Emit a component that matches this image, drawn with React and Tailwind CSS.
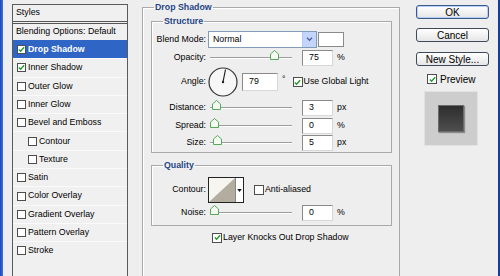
import React from 'react';

const font = { fontFamily: '"Liberation Sans", Arial, sans-serif' };

const Check = ({ on, size = 'w-[9px] h-[9px]' }) => (
  <span className={`${size} shrink-0 border border-[#4d4d4d] bg-white flex items-center justify-center`}>
    {on && (
      <svg viewBox="0 0 8 8" className="w-[7px] h-[7px]">
        <path d="M1 4 L3 6 L7 1.5" fill="none" stroke="#1f9a2a" strokeWidth="1.6" />
      </svg>
    )}
  </span>
);

const styleRows = [
  { name: 'Drop Shadow', on: true, sel: true },
  { name: 'Inner Shadow', on: true },
  { name: 'Outer Glow' },
  { name: 'Inner Glow' },
  { name: 'Bevel and Emboss' },
  { name: 'Contour', sub: true },
  { name: 'Texture', sub: true },
  { name: 'Satin' },
  { name: 'Color Overlay' },
  { name: 'Gradient Overlay' },
  { name: 'Pattern Overlay' },
  { name: 'Stroke' },
];

const Slider = ({ pos }) => (
  <div className="relative w-[82px] h-full ml-[4px]">
    <div className="absolute left-0 right-0 top-[7px] h-[2px] border-t border-[#9c9c9c] border-b border-b-white" />
    <svg
      viewBox="0 0 9 10"
      className="absolute top-[0px] w-[9px] h-[10px]"
      style={{ left: pos }}
    >
      <path d="M0.5 9.5 V4 L4.5 0.5 L8.5 4 V9.5 Z" fill="#f4fbf2" stroke="#58a858" strokeWidth="1" />
    </svg>
  </div>
);

const NumBox = ({ value, w = 'w-[31px]', h = 'h-[16px]' }) => (
  <div className={`${w} ${h} bg-white border border-[#8a8a8a] border-r-[#d8d8d8] border-b-[#d8d8d8] pl-[6px] flex items-center text-[8.8px]`}>
    {value}
  </div>
);

const Label = ({ children }) => (
  <div className="w-[54px] text-right text-[8.8px] shrink-0">{children}</div>
);

const SliderRow = ({ label, value, unit, pos, mt }) => (
  <div className={`flex items-center h-[16px] ${mt}`}>
    <Label>{label}</Label>
    <Slider pos={pos} />
    <div className="ml-[10px]">
      <NumBox value={value} />
    </div>
    <span className="ml-[4px] text-[8.8px]">{unit}</span>
  </div>
);

const Button = ({ children, mt, def }) => (
  <div
    className={`${mt} h-[14px] w-[73px] rounded-[3px] border ${def ? 'border-[#3c5a8c]' : 'border-[#3e4a5a]'} bg-gradient-to-b from-white to-[#e6e6e6] flex items-center justify-center text-[10px] ${def ? 'shadow-[inset_0_0_0_1px_#b8cff5]' : ''}`}
  >
    {children}
  </div>
);

export default function App() {
  return (
    <div className="w-[500px] h-[276px] overflow-hidden bg-[#eeeeee] flex text-black" style={font}>
      <div className="w-[3px] h-full bg-gradient-to-r from-[#1b47b8] to-[#3e74db]" />

      {/* styles list */}
      <div className="ml-[9px] mt-[4px] w-[116px] h-[300px] border border-[#5b5b5b] bg-[#f0f0f0] shrink-0">
        <div className="h-[19px] pl-[3px] flex items-center text-[8.8px] border-b-[3px] border-double border-[#555]">Styles</div>
        <div className="h-[16px] pl-[3px] flex items-center text-[8.8px]">Blending Options: Default</div>
        {styleRows.map((r) => (
          <div
            key={r.name}
            className={`h-[18.3px] flex items-center text-[8.8px] border-t ${r.sel ? 'bg-[#2f65c4] border-[#2f65c4] text-white font-bold' : 'border-[#fafafa]'} ${r.sub ? 'pl-[15px]' : 'pl-[4px]'}`}
          >
            <Check on={r.on} />
            <span className="ml-[2px]">{r.name}</span>
          </div>
        ))}
      </div>

      {/* main settings */}
      <fieldset className="ml-[14px] mt-[1px] w-[258px] h-[300px] border border-[#a9a9a9] shadow-[inset_1px_1px_0_#fff] pl-[8px] pr-[7px] shrink-0">
        <legend className="ml-[3px] px-[1px] leading-[12px] text-[8.8px] font-bold text-[#1e4485]">Drop Shadow</legend>

        <fieldset className="mt-[2px] w-[241px] border border-[#a9a9a9] shadow-[inset_1px_1px_0_#fff] pb-[1px]">
          <legend className="ml-[11px] px-[1px] leading-[12px] text-[8.8px] font-bold text-[#1e4485]">Structure</legend>

          <div className="flex items-center h-[17px] mt-[4px]">
            <Label>Blend Mode:</Label>
            <div className="ml-[2px] w-[109px] h-[17px] bg-white border border-[#7f9db9] flex items-center">
              <span className="pl-[4px] flex-1 text-[8.8px]">Normal</span>
              <div className="w-[14px] h-[15px] bg-[#c3d5fb] border-l border-[#b5c8f0] flex items-center justify-center">
                <svg viewBox="0 0 8 6" className="w-[7px] h-[5px]">
                  <path d="M1 1 L4 4 L7 1" fill="none" stroke="#4d61a4" strokeWidth="1.6" />
                </svg>
              </div>
            </div>
            <div className="ml-[1px] w-[26px] h-[15px] bg-white border border-[#8a8a8a]" />
          </div>

          <SliderRow label="Opacity:" value="75" unit="%" pos="60px" mt="mt-[2px]" />

          <div className="flex items-center h-[30px] mt-[1px]">
            <Label>Angle:</Label>
            <svg viewBox="0 0 30 30" className="ml-[2px] w-[30px] h-[30px] shrink-0">
              <circle cx="15" cy="15" r="14" fill="#f7f7f7" stroke="#333" strokeWidth="1.2" />
              <line x1="15" y1="15" x2="17.5" y2="2.5" stroke="#222" strokeWidth="1.2" />
              <circle cx="15" cy="15" r="1.2" fill="#222" />
            </svg>
            <div className="ml-[4px]">
              <NumBox value="79" w="w-[36px]" h="h-[18px]" />
            </div>
            <span className="ml-[4px] text-[8.8px] self-start mt-[6px]">°</span>
            <div className="ml-[7px] flex items-center">
              <Check on size="w-[10px] h-[10px]" />
              <span className="ml-[1px] text-[8.8px]">Use Global Light</span>
            </div>
          </div>

          <SliderRow label="Distance:" value="3" unit="px" pos="2px" mt="mt-[3px]" />
          <SliderRow label="Spread:" value="0" unit="%" pos="0px" mt="mt-[2px]" />
          <SliderRow label="Size:" value="5" unit="px" pos="3px" mt="mt-[1px]" />
        </fieldset>

        <fieldset className="mt-[6px] w-[241px] border border-[#a9a9a9] shadow-[inset_1px_1px_0_#fff] pb-[4px]">
          <legend className="ml-[11px] px-[1px] leading-[12px] text-[8.8px] font-bold text-[#1e4485]">Quality</legend>

          <div className="flex items-center h-[26px] mt-[6px]">
            <Label>Contour:</Label>
            <div className="ml-[2px] w-[36px] h-[26px] border border-[#222] bg-white flex">
              <svg viewBox="0 0 26 24" preserveAspectRatio="none" className="w-[26px] h-full">
                <rect width="26" height="24" fill="#f6f5f0" />
                <path d="M0 24 L26 0 V24 Z" fill="#b3ad9f" />
              </svg>
              <div className="flex-1 border-l border-[#888] flex items-center justify-center">
                <svg viewBox="0 0 6 4" className="w-[5px] h-[3px]">
                  <path d="M0 0 H6 L3 4 Z" fill="#111" />
                </svg>
              </div>
            </div>
            <div className="ml-[10px] flex items-center">
              <Check size="w-[10px] h-[10px]" />
              <span className="ml-[1px] text-[8.8px]">Anti-aliased</span>
            </div>
          </div>

          <SliderRow label="Noise:" value="0" unit="%" pos="0px" mt="mt-[2px]" />
        </fieldset>

        <div className="mt-[6px] ml-[61px] flex items-center h-[11px]">
          <Check on size="w-[10px] h-[10px]" />
          <span className="ml-[1px] text-[8.8px]">Layer Knocks Out Drop Shadow</span>
        </div>
      </fieldset>

      {/* buttons */}
      <div className="ml-[16px] w-[73px] flex flex-col shrink-0">
        <Button mt="mt-[5px]" def>OK</Button>
        <Button mt="mt-[9px]">Cancel</Button>
        <Button mt="mt-[10px]">New Style...</Button>
        <div className="mt-[8px] ml-[11px] flex items-center h-[10px]">
          <Check on size="w-[10px] h-[10px]" />
          <span className="ml-[3px] text-[10px]">Preview</span>
        </div>
        <div className="mt-[7px] ml-[8px] w-[54px] h-[55px] bg-[#cdcdcd] border border-[#e2e2e2] flex items-center justify-center">
          <div className="w-[26px] h-[27px] bg-gradient-to-b from-[#2e2e2e] to-[#4e4e4e] border border-[#6a6a6a] shadow-[1px_1px_1px_#8a8a8a]" />
        </div>
      </div>

      <div className="flex-1" />
      <div className="w-[2px] h-full bg-[#173f96]" />
    </div>
  );
}
